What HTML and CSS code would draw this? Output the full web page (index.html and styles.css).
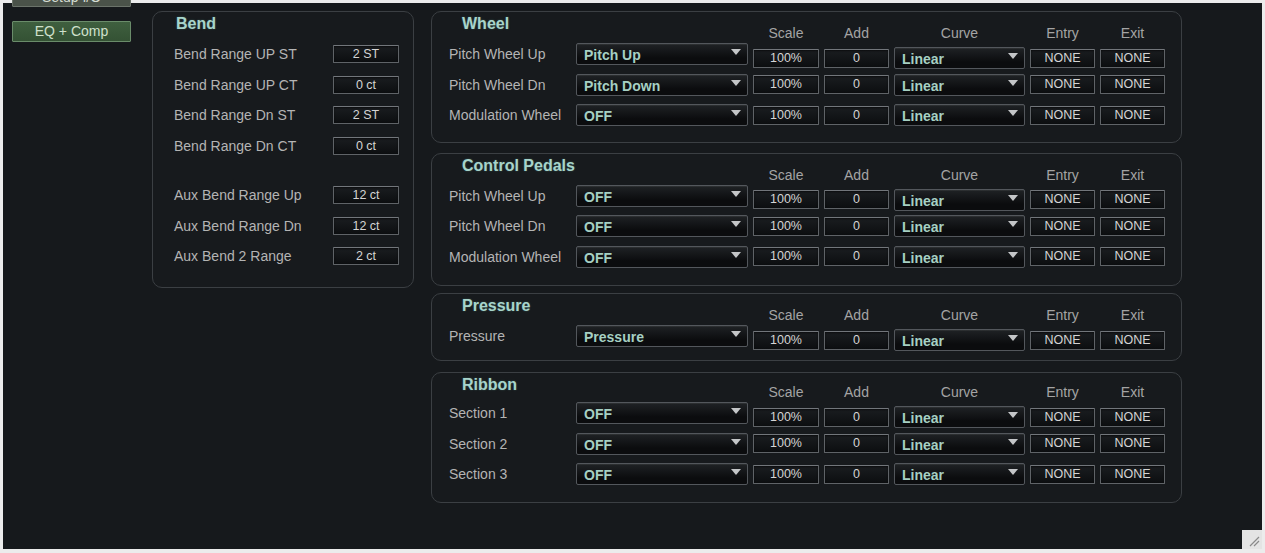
FILE: index.html
```html
<!DOCTYPE html>
<html>
<head>
<meta charset="utf-8">
<title>Controllers</title>
<link rel="stylesheet" href="styles.css">
</head>
<body>
<div class="app">
  <aside class="sidebar">
    <button class="side-btn setup">Setup I/O</button>
    <button class="side-btn active">EQ + Comp</button>
  </aside>

  <section class="panel bend">
    <h2 class="title">Bend</h2>
    <span class="lbl">Bend Range UP ST</span><span class="box">2 ST</span>
    <span class="lbl">Bend Range UP CT</span><span class="box">0 ct</span>
    <span class="lbl">Bend Range Dn ST</span><span class="box">2 ST</span>
    <span class="lbl">Bend Range Dn CT</span><span class="box">0 ct</span>
    <span class="spacer"></span>
    <span class="lbl">Aux Bend Range Up</span><span class="box">12 ct</span>
    <span class="lbl">Aux Bend Range Dn</span><span class="box">12 ct</span>
    <span class="lbl">Aux Bend 2 Range</span><span class="box">2 ct</span>
  </section>

  <div class="right">
    <section class="panel mod rows3 wheel">
      <h2 class="title">Wheel</h2>
      <span class="hd">Scale</span><span class="hd">Add</span><span class="hd">Curve</span><span class="hd">Entry</span><span class="hd">Exit</span>

      <span class="lbl">Pitch Wheel Up</span>
      <div class="dd"><span>Pitch Up</span><svg class="arr" width="10" height="6" viewBox="0 0 10 6"><path d="M0 0H10L5 6Z"/></svg></div>
      <span class="box first">100%</span><span class="box first">0</span>
      <div class="dd first"><span>Linear</span><svg class="arr" width="10" height="6" viewBox="0 0 10 6"><path d="M0 0H10L5 6Z"/></svg></div>
      <span class="box first">NONE</span><span class="box first">NONE</span>

      <span class="lbl">Pitch Wheel Dn</span>
      <div class="dd"><span>Pitch Down</span><svg class="arr" width="10" height="6" viewBox="0 0 10 6"><path d="M0 0H10L5 6Z"/></svg></div>
      <span class="box">100%</span><span class="box">0</span>
      <div class="dd"><span>Linear</span><svg class="arr" width="10" height="6" viewBox="0 0 10 6"><path d="M0 0H10L5 6Z"/></svg></div>
      <span class="box">NONE</span><span class="box">NONE</span>

      <span class="lbl">Modulation Wheel</span>
      <div class="dd"><span>OFF</span><svg class="arr" width="10" height="6" viewBox="0 0 10 6"><path d="M0 0H10L5 6Z"/></svg></div>
      <span class="box">100%</span><span class="box">0</span>
      <div class="dd"><span>Linear</span><svg class="arr" width="10" height="6" viewBox="0 0 10 6"><path d="M0 0H10L5 6Z"/></svg></div>
      <span class="box">NONE</span><span class="box">NONE</span>
    </section>

    <section class="panel mod rows3 pedals">
      <h2 class="title">Control Pedals</h2>
      <span class="hd">Scale</span><span class="hd">Add</span><span class="hd">Curve</span><span class="hd">Entry</span><span class="hd">Exit</span>

      <span class="lbl">Pitch Wheel Up</span>
      <div class="dd"><span>OFF</span><svg class="arr" width="10" height="6" viewBox="0 0 10 6"><path d="M0 0H10L5 6Z"/></svg></div>
      <span class="box first">100%</span><span class="box first">0</span>
      <div class="dd first"><span>Linear</span><svg class="arr" width="10" height="6" viewBox="0 0 10 6"><path d="M0 0H10L5 6Z"/></svg></div>
      <span class="box first">NONE</span><span class="box first">NONE</span>

      <span class="lbl">Pitch Wheel Dn</span>
      <div class="dd"><span>OFF</span><svg class="arr" width="10" height="6" viewBox="0 0 10 6"><path d="M0 0H10L5 6Z"/></svg></div>
      <span class="box">100%</span><span class="box">0</span>
      <div class="dd"><span>Linear</span><svg class="arr" width="10" height="6" viewBox="0 0 10 6"><path d="M0 0H10L5 6Z"/></svg></div>
      <span class="box">NONE</span><span class="box">NONE</span>

      <span class="lbl">Modulation Wheel</span>
      <div class="dd"><span>OFF</span><svg class="arr" width="10" height="6" viewBox="0 0 10 6"><path d="M0 0H10L5 6Z"/></svg></div>
      <span class="box">100%</span><span class="box">0</span>
      <div class="dd"><span>Linear</span><svg class="arr" width="10" height="6" viewBox="0 0 10 6"><path d="M0 0H10L5 6Z"/></svg></div>
      <span class="box">NONE</span><span class="box">NONE</span>
    </section>

    <section class="panel mod rows1 pressure">
      <h2 class="title">Pressure</h2>
      <span class="hd">Scale</span><span class="hd">Add</span><span class="hd">Curve</span><span class="hd">Entry</span><span class="hd">Exit</span>

      <span class="lbl">Pressure</span>
      <div class="dd"><span>Pressure</span><svg class="arr" width="10" height="6" viewBox="0 0 10 6"><path d="M0 0H10L5 6Z"/></svg></div>
      <span class="box first">100%</span><span class="box first">0</span>
      <div class="dd first"><span>Linear</span><svg class="arr" width="10" height="6" viewBox="0 0 10 6"><path d="M0 0H10L5 6Z"/></svg></div>
      <span class="box first">NONE</span><span class="box first">NONE</span>
    </section>

    <section class="panel mod ribbon">
      <h2 class="title">Ribbon</h2>
      <span class="hd">Scale</span><span class="hd">Add</span><span class="hd">Curve</span><span class="hd">Entry</span><span class="hd">Exit</span>

      <span class="lbl">Section 1</span>
      <div class="dd"><span>OFF</span><svg class="arr" width="10" height="6" viewBox="0 0 10 6"><path d="M0 0H10L5 6Z"/></svg></div>
      <span class="box first">100%</span><span class="box first">0</span>
      <div class="dd first"><span>Linear</span><svg class="arr" width="10" height="6" viewBox="0 0 10 6"><path d="M0 0H10L5 6Z"/></svg></div>
      <span class="box first">NONE</span><span class="box first">NONE</span>

      <span class="lbl">Section 2</span>
      <div class="dd"><span>OFF</span><svg class="arr" width="10" height="6" viewBox="0 0 10 6"><path d="M0 0H10L5 6Z"/></svg></div>
      <span class="box">100%</span><span class="box">0</span>
      <div class="dd"><span>Linear</span><svg class="arr" width="10" height="6" viewBox="0 0 10 6"><path d="M0 0H10L5 6Z"/></svg></div>
      <span class="box">NONE</span><span class="box">NONE</span>

      <span class="lbl">Section 3</span>
      <div class="dd"><span>OFF</span><svg class="arr" width="10" height="6" viewBox="0 0 10 6"><path d="M0 0H10L5 6Z"/></svg></div>
      <span class="box">100%</span><span class="box">0</span>
      <div class="dd"><span>Linear</span><svg class="arr" width="10" height="6" viewBox="0 0 10 6"><path d="M0 0H10L5 6Z"/></svg></div>
      <span class="box">NONE</span><span class="box">NONE</span>
    </section>
  </div>

  <div class="grip"><svg width="20" height="19" viewBox="0 0 20 19"><path d="M8 16L17 7M12 16L17 11" stroke="#8a8a8a" stroke-width="1.2"/></svg></div>
</div>
</body>
</html>
```

FILE: styles.css
```css
html, body {
  margin: 0;
  padding: 0;
  background: #ececec;
}

body {
  font-family: "Liberation Sans", Arial, sans-serif;
  font-size: 14px;
  color: #b4b4b4;
}

.app {
  position: relative;
  box-sizing: border-box;
  width: 1259px;
  height: 546px;
  margin: 3px 0 0 3px;
  padding: 8px 0 0 9px;
  background: #16191c;
  display: flex;
  align-items: flex-start;
}

.sidebar {
  width: 119px;
  margin-right: 21px;
  display: flex;
  flex-direction: column;
}

.side-btn {
  box-sizing: border-box;
  width: 119px;
  font-family: "Liberation Sans", Arial, sans-serif;
  font-size: 14px;
  padding: 0;
  border-radius: 1px;
}

.setup {
  height: 20px;
  margin-top: -24px;
  background: #4a5249;
  border: 1px solid #6b736a;
  color: #d4dcd2;
  line-height: 14px;
}

.active {
  height: 21px;
  margin-top: 14px;
  background: linear-gradient(#3f5f3f, #345234);
  border: 1px solid #6a8c6a;
  color: #cfe0cc;
  line-height: 19px;
}

.panel {
  box-sizing: border-box;
  border: 1.5px solid #3b3f43;
  border-radius: 10px;
  background: #171a1d;
}

.title {
  margin: 0;
  padding-top: 3px;
  font-size: 16px;
  line-height: 18px;
  font-weight: bold;
  color: #a7d4cb;
  text-shadow: 0 0 2px rgba(110, 190, 175, 0.35);
  align-self: start;
}

/* Bend panel */
.bend {
  width: 262px;
  margin-right: 17px;
  padding: 0 0 15px 21px;
  display: grid;
  grid-template-columns: 159px 66px;
  grid-template-rows: 27px repeat(4, 30.5px) 19px repeat(3, 30.5px);
  align-items: center;
}

.bend .title {
  grid-column: 1 / -1;
  margin-left: 2px;
}

.spacer {
  grid-column: 1 / -1;
}

.lbl {
  white-space: nowrap;
  line-height: 16px;
}

.box {
  box-sizing: border-box;
  height: 19px;
  border: 1px solid #5f6367;
  border-top-color: #72767b;
  border-radius: 1px;
  background: linear-gradient(#1a1d20, #0c0e10);
  box-shadow: inset 0 1px 2px rgba(0, 0, 0, 0.6);
  color: #d4d4d4;
  font-size: 12.5px;
  line-height: 17px;
  text-align: center;
}

.bend .box {
  height: 18px;
  line-height: 16px;
}

/* Modulation panels */
.right {
  width: 751px;
  display: flex;
  flex-direction: column;
}

.mod {
  padding: 0 0 11px 17px;
  display: grid;
  grid-template-columns: 122px 172px 66px 65px 131px 65px 65px;
  column-gap: 5px;
  align-items: center;
}

.rows3 {
  grid-template-rows: 27px repeat(3, 30.5px);
}

.rows1 {
  grid-template-rows: 27px 30px;
}

.pedals {
  margin-top: 10px;
  padding-bottom: 13px;
}

.pressure {
  margin-top: 7px;
  padding-bottom: 9px;
}

.ribbon {
  margin-top: 11px;
  padding-bottom: 12px;
  grid-template-rows: 25px repeat(3, 30.5px);
}

.mod .title {
  grid-column: 1 / 3;
  margin-left: 13px;
}

.hd {
  align-self: end;
  margin-bottom: -1px;
  text-align: center;
  line-height: 14px;
  font-size: 14px;
  color: #a4a4a4;
}

.dd {
  box-sizing: border-box;
  height: 22px;
  display: flex;
  justify-content: space-between;
  align-items: flex-start;
  padding: 0 6px 0 7px;
  border: 1px solid #53575c;
  border-radius: 2px;
  background: linear-gradient(#1f2225, #0b0c0e 70%);
  box-shadow: inset 0 1px 0 rgba(255, 255, 255, 0.06);
  color: #a6d0c3;
  font-weight: bold;
  font-size: 14px;
  line-height: 22px;
}

.arr {
  margin-top: 5px;
  fill: #c4c6c8;
  flex: none;
}

.first {
  margin-top: 8px;
}

.grip {
  position: absolute;
  right: 0;
  bottom: 0;
  width: 20px;
  height: 19px;
  background: #e4e4e4;
}

.grip svg {
  display: block;
}
```
